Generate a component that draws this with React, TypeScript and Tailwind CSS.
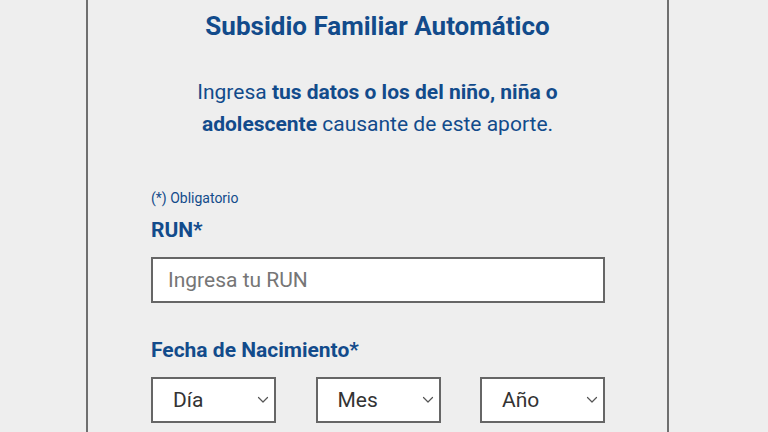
import React from "react";

function Chevron() {
  return (
    <svg width="12" height="8" viewBox="0 0 12 8" fill="none" className="shrink-0">
      <path d="M1.5 1.5 L6 6 L10.5 1.5" stroke="#555" strokeWidth="1.2" strokeLinecap="round" strokeLinejoin="round" />
    </svg>
  );
}

function SelectBox({ label }: { label: string }) {
  return (
    <div className="flex h-[46px] w-[125px] items-center justify-between border-2 border-[#666] bg-white pl-[20px] pr-[5px]">
      <span className="text-[21px] leading-none text-[#333]">{label}</span>
      <Chevron />
    </div>
  );
}

export default function App() {
  return (
    <div
      className="min-h-screen w-full bg-[#eeeeee]"
      style={{ fontFamily: "Roboto, 'Liberation Sans', sans-serif" }}
    >
      <div className="ml-[86px] flex min-h-[432px] w-[583px] flex-col border-x-2 border-[#6f6f6f] px-[63px] pt-3">
        <h1 className="text-center text-[26px] font-bold leading-[28px] text-[#124b8b]">
          Subsidio Familiar Automático
        </h1>
        <div className="mt-[36px] flex flex-col items-center text-[21px] leading-[32px] text-[#124b8b]">
          <p>
            Ingresa <span className="font-bold">tus datos o los del niño, niña o</span>
          </p>
          <p>
            <span className="font-bold">adolescente</span> causante de este aporte.
          </p>
        </div>
        <p className="mt-[48px] text-[14px] leading-[20px] text-[#124b8b]">(*) Obligatorio</p>
        <label className="mt-[8px] text-[21px] font-bold leading-[28px] text-[#124b8b]">RUN*</label>
        <div className="mt-[13px] flex h-[46px] w-[454px] items-center border-2 border-[#666] bg-white pl-[15px]">
          <span className="text-[21px] leading-none text-[#767676]">Ingresa tu RUN</span>
        </div>
        <label className="mt-[33px] text-[21px] font-bold leading-[28px] text-[#124b8b]">Fecha de Nacimiento*</label>
        <div className="mt-[13px] flex w-[454px] justify-between">
          <SelectBox label="Día" />
          <SelectBox label="Mes" />
          <SelectBox label="Año" />
        </div>
      </div>
    </div>
  );
}
